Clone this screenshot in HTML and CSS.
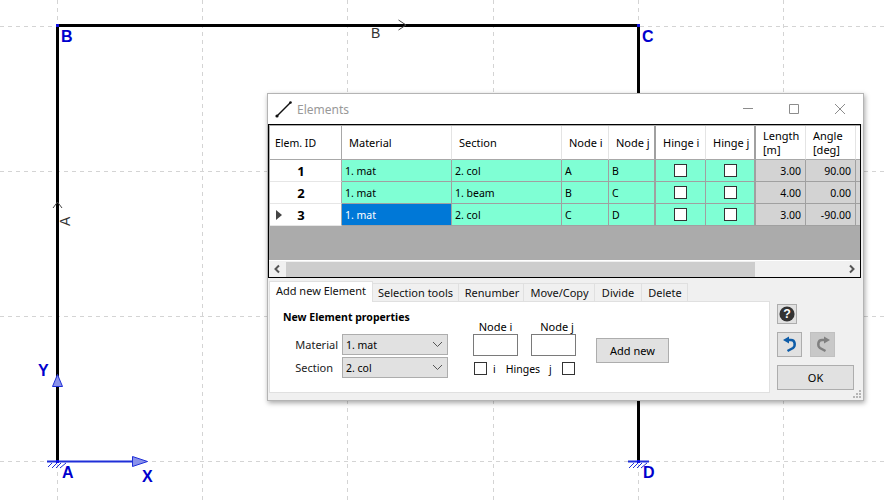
FILE: index.html
```html
<!DOCTYPE html>
<html lang="en">
<head>
<meta charset="utf-8">
<title>Elements</title>
<link rel="stylesheet" href="styles.css">
</head>
<body>
<main class="desktop">
  <svg class="canvas" width="888" height="502" viewBox="0 0 888 502">
    <g class="grid">
      <path d="M57.5 0V502M202.5 0V502M347.5 0V502M493.5 0V502M638.5 0V502M783.5 0V502"/>
      <path d="M0 26.5H888M0 171.5H888M0 316.5H888M0 461.5H888"/>
    </g>
    <g class="beam">
      <path d="M57.5 26V461M56 25.5H640M638.5 25V461"/>
    </g>
    <g class="axis">
      <path class="axis-line" d="M47 461.5H134"/>
      <path class="axis-tip" d="M132.500 456.500L147.500 461.500L132.500 466.500Z"/>
      <path class="axis-tip" d="M52.500 386.500L57.500 374.500L62.500 386.500Z"/>
      <path class="axis-line" d="M628 461.500H649"/>
      <path class="hatch" d="M48 467L52 463M52 468L57 463M56 468L61 463M60 468L66 463M629 468L634 463M633 468L638 463M637 468L642 463M641 468L647 463"/>
      <rect class="node" x="56" y="24" width="3" height="3"/>
      <rect class="node" x="637" y="24" width="3" height="3"/>
      <rect class="node" x="56" y="460" width="3" height="3"/>
      <rect class="node" x="637" y="460" width="3" height="3"/>
    </g>
    <path class="chev" d="M398.500 20L406 25L398.500 30M53 208L57.500 202L62 208"/>
    <text class="lbl" x="61" y="42">B</text>
    <text class="lbl" x="642" y="42">C</text>
    <text class="lbl" x="62" y="478">A</text>
    <text class="lbl" x="643" y="478">D</text>
    <text class="lbl" x="38" y="376">Y</text>
    <text class="lbl" x="142" y="482">X</text>
    <text class="tag" x="371" y="38">B</text>
    <text class="tag" transform="translate(70 226) rotate(-90)">A</text>
  </svg>

  <section class="dialog">
    <header class="titlebar">
      <svg class="app-icon" width="18" height="18" viewBox="0 0 18 18"><path class="app-line" d="M2 16L15.500 2.500"/><circle cx="2" cy="16" r="1.600"/><circle cx="15.500" cy="2.500" r="1.300"/></svg>
      <span class="title">Elements</span>
      <svg class="winbtn" width="12" height="12" viewBox="0 0 12 12"><path d="M1 5.500H11"/></svg>
      <svg class="winbtn" width="12" height="12" viewBox="0 0 12 12"><path d="M1.500 1.500H10.500V10.500H1.500Z"/></svg>
      <svg class="winbtn last" width="12" height="12" viewBox="0 0 12 12"><path d="M1 1L11 11M11 1L1 11"/></svg>
    </header>

    <div class="gridview">
      <div class="table">
        <div class="th rowh">Elem. ID</div>
        <div class="th">Material</div>
        <div class="th">Section</div>
        <div class="th">Node i</div>
        <div class="th sep">Node j</div>
        <div class="th">Hinge i</div>
        <div class="th sep">Hinge j</div>
        <div class="th">Length<br>[m]</div>
        <div class="th">Angle<br>[deg]</div>
        <div class="th end"></div>

        <div class="rh">1</div>
        <div class="td">1. mat</div><div class="td">2. col</div><div class="td">A</div><div class="td sep">B</div>
        <div class="td chk"><i class="box"></i></div><div class="td chk sep"><i class="box"></i></div>
        <div class="ro">3.00</div><div class="ro">90.00</div><div class="ro end"></div>

        <div class="rh">2</div>
        <div class="td">1. mat</div><div class="td">1. beam</div><div class="td">B</div><div class="td sep">C</div>
        <div class="td chk"><i class="box"></i></div><div class="td chk sep"><i class="box"></i></div>
        <div class="ro">4.00</div><div class="ro">0.00</div><div class="ro end"></div>

        <div class="rh cur"><svg class="cur-arrow" width="7" height="10" viewBox="0 0 7 10"><path d="M0 0L6 5L0 10Z"/></svg>3</div>
        <div class="td selected">1. mat</div><div class="td">2. col</div><div class="td">C</div><div class="td sep">D</div>
        <div class="td chk"><i class="box"></i></div><div class="td chk sep"><i class="box"></i></div>
        <div class="ro">3.00</div><div class="ro">-90.00</div><div class="ro end"></div>
      </div>
      <div class="empty"></div>
      <div class="hscroll">
        <svg class="sarrow" width="17" height="16" viewBox="0 0 17 16"><path d="M10 4.500L6.500 8L10 11.500"/></svg>
        <div class="thumb"></div>
        <svg class="sarrow end-arrow" width="17" height="16" viewBox="0 0 17 16"><path d="M7 4.500L10.500 8L7 11.500"/></svg>
      </div>
    </div>

    <div class="lower">
      <div class="tabsarea">
        <nav class="tabs">
          <span class="tab active">Add new Element</span>
          <span class="tab w-sel">Selection tools</span>
          <span class="tab w-ren">Renumber</span>
          <span class="tab w-mov">Move/Copy</span>
          <span class="tab w-div">Divide</span>
          <span class="tab w-del">Delete</span>
        </nav>
        <div class="panel">
          <div class="props">
            <h2 class="heading">New Element properties</h2>
            <div class="combo-row"><span class="flabel">Material</span><span class="combo">1. mat<svg width="11" height="7" viewBox="0 0 11 7"><path d="M1 1L5.500 5.500L10 1"/></svg></span></div>
            <div class="combo-row"><span class="flabel short">Section</span><span class="combo">2. col<svg width="11" height="7" viewBox="0 0 11 7"><path d="M1 1L5.500 5.500L10 1"/></svg></span></div>
          </div>
          <div class="nodes">
            <div class="node-fields">
              <label class="nfield">Node i<span class="input"></span></label>
              <label class="nfield nudge">Node j<span class="input"></span></label>
            </div>
            <div class="hinges"><i class="box"></i><span class="hi">i</span><span class="hw">Hinges</span><span class="hj">j</span><i class="box"></i></div>
          </div>
          <button class="btn addnew">Add new</button>
        </div>
      </div>
      <aside class="actions">
        <button class="iconbtn help"><svg width="18" height="18" viewBox="0 0 18 18"><circle cx="9" cy="9" r="8.500" fill="#333"/><text class="q" x="9" y="14">?</text></svg></button>
        <div class="undo-row">
          <button class="iconbtn"><svg width="18" height="18" viewBox="0 0 18 18"><path class="undo-head" d="M2 4L8 0.500V7.500Z"/><path class="undo" d="M7 4H10C14.500 4 14.500 10 12 12L6.500 15"/></svg></button>
          <button class="iconbtn off"><svg width="18" height="18" viewBox="0 0 18 18"><path class="redo-head" d="M16 4L10 0.500V7.500Z"/><path class="redo" d="M11 4H8C3.500 4 3.500 10 6 12L11.500 15"/></svg></button>
        </div>
        <button class="btn ok">OK</button>
      </aside>
      <svg class="grip" width="10" height="10" viewBox="0 0 10 10"><path d="M7 1h2v2H7zM4 4h2v2H4zM7 4h2v2H7zM1 7h2v2H1zM4 7h2v2H4zM7 7h2v2H7z"/></svg>
    </div>
  </section>
</main>
</body>
</html>
```
FILE: styles.css
```css
* { box-sizing: border-box; }
html, body { margin: 0; padding: 0; background: #fff; }
body { font-family: "Noto Sans", "Open Sans", sans-serif; font-size: 11px; color: #000; }
.desktop { position: relative; width: 888px; height: 502px; overflow: hidden; }
.canvas { position: absolute; left: 0; top: 0; }
.grid path { fill: none; stroke: #d4d4d4; stroke-width: 1; stroke-dasharray: 4 4; }
.beam path { fill: none; stroke: #000; stroke-width: 3; }
.axis-line { fill: none; stroke: #1f2fd8; stroke-width: 2; }
.axis-tip { fill: #8a92ea; stroke: #1f2fd8; stroke-width: 1; }
.hatch { fill: none; stroke: #1f2fd8; stroke-width: 1; }
.node { fill: #1010e0; }
.chev { fill: none; stroke: #444; stroke-width: 1; }
.lbl { font-family: "Liberation Sans", sans-serif; font-size: 16px; font-weight: 700; fill: #0000cd; }
.tag { font-family: "Liberation Sans", sans-serif; font-size: 14px; fill: #333; }

.dialog { position: absolute; left: 267px; top: 93px; width: 597px; height: 308px; background: #f0f0f0; border: 1px solid #b4b4b4; box-shadow: 1px 2px 5px rgba(0,0,0,.35); display: flex; flex-direction: column; }
.titlebar { height: 30px; background: #fff; display: flex; align-items: center; padding-left: 7px; }
.app-icon { flex: none; }
.app-icon circle { fill: #111; }
.app-line { fill: none; stroke: #111; stroke-width: 1.500; }
.title { margin-left: 4px; font-size: 12px; color: #999; flex: 1; }
.winbtn { margin-left: 34px; flex: none; }
.winbtn path { fill: none; stroke: #8c8c8c; stroke-width: 1; }
.winbtn.last { margin-right: 17px; }

.gridview { margin-right: 2px; height: 154px; border: 1px solid #000; background: #ababab; display: flex; flex-direction: column; }
.table { padding: 1px 0 0 1px; display: grid; grid-template-columns: 72px 110px 110px 47px 47px 50px 50px 50px 50px 4px; grid-template-rows: 34px 22px 22px 22px; flex: none; }
.th { background: #fff; border-right: 1px solid #e4e4e4; border-bottom: 1px solid #a8a8a8; display: flex; align-items: center; padding-left: 7px; line-height: 14px; white-space: nowrap; font-size: 11px; }
.th.rowh { padding-left: 5px; border-right: 1px solid #a8a8a8; font-size: 10.500px; }
.rh { background: #fff; border-bottom: 1px solid #e6e6e6; border-right: 1px solid #a8a8a8; font-weight: 700; font-size: 13px; display: flex; align-items: center; justify-content: center; position: relative; padding-right: 9px; }
.cur-arrow { position: absolute; left: 6px; top: 6px; }
.cur-arrow path { fill: #444; }
.td { background: #7fffd4; border-right: 1px solid #a0a0a0; border-bottom: 1px solid #a0a0a0; display: flex; align-items: center; padding-left: 3px; font-size: 10.500px; }
.td.selected { background: #0078d7; color: #fff; }
.td.chk { justify-content: center; padding: 0; }
.box { display: block; width: 13px; height: 13px; flex: none; background: #fff; border: 1px solid #333; }
.ro { background: #d3d3d3; border-right: 1px solid #a0a0a0; border-bottom: 1px solid #a0a0a0; display: flex; align-items: center; justify-content: flex-end; padding-right: 4px; font-size: 10.500px; }
.th.sep, .td.sep { border-right: 2px solid #a0a0a0; }
.th.end { background: #fff; padding: 0; border: 0; border-bottom: 1px solid #a8a8a8; }
.ro.end { padding: 0; border-right: 0; }
.empty { flex: 1; }
.hscroll { height: 17px; background: #f0f0f0; border-top: 1px solid #fff; display: flex; align-items: center; }
.sarrow { flex: none; }
.sarrow path { fill: none; stroke: #555; stroke-width: 2; }
.thumb { width: 469px; height: 15px; background: #cdcdcd; }
.end-arrow { margin-left: auto; }

.lower { position: relative; flex: 1; display: flex; padding: 3px 0 0 1px; }
.tabsarea { width: 501px; display: flex; flex-direction: column; }
.tabs { display: flex; align-items: flex-end; height: 20px; position: relative; z-index: 1; }
.tab { height: 18px; border: 1px solid #e0e0e0; border-left: 0; border-bottom: 0; background: #f0f0f0; display: flex; align-items: center; justify-content: center; color: #111; font-size: 11px; white-space: nowrap; }
.tab.active { width: 104px; height: 21px; margin-bottom: -1px; padding-bottom: 3px; background: #fff; border: 1px solid #e0e0e0; border-bottom: 0; }
.w-sel { width: 86px; }
.w-ren { width: 65px; padding-left: 2px; }
.w-mov { width: 71px; padding-left: 1px; }
.w-div { width: 47px; }
.w-del { width: 46px; padding-left: 1px; }
.panel { width: 501px; height: 92px; background: #fff; border: 1px solid #e0e0e0; display: flex; align-items: flex-start; }
.props { width: 179px; padding: 8px 0 0 13px; flex: none; }
.heading { margin: 0 0 10px; font-size: 10.500px; line-height: 14px; font-weight: 700; }
.combo-row { display: flex; align-items: center; margin-bottom: 2px; height: 21px; }
.flabel { width: 59px; text-align: right; padding-right: 4px; font-size: 11px; color: #222; }
.flabel.short { padding-right: 9px; }
.combo { width: 106px; height: 21px; background: #e1e1e1; border: 1px solid #adadad; display: flex; align-items: center; justify-content: space-between; padding: 0 4px 0 3px; font-size: 10.500px; }
.combo svg path { fill: none; stroke: #555; stroke-width: 1; }
.nodes { width: 116px; padding-top: 17px; flex: none; margin-left: 24px; margin-right: -7px; }
.node-fields { display: flex; gap: 13px; }
.nfield { width: 45px; display: flex; flex-direction: column; align-items: center; font-size: 11px; line-height: 15px; }
.nfield.nudge { text-indent: 7px; }
.input { display: block; width: 45px; height: 22px; background: #fff; border: 1px solid #7a7a7a; }
.hinges { display: flex; align-items: center; margin-top: 6px; padding-left: 1px; font-size: 10.500px; height: 13px; }
.hi { margin-left: 6px; }
.hw { margin-left: 10px; }
.hj { margin-left: 9px; margin-right: 10px; }
.btn { font-family: inherit; font-size: 11px; background: #e1e1e1; border: 1px solid #adadad; color: #000; padding: 0; }
.addnew { width: 73px; height: 25px; margin: 36px 0 0 14px; flex: none; }
.actions { width: 90px; padding: 23px 0 0 7px; display: flex; flex-direction: column; }
.iconbtn { width: 25px; height: 25px; background: #e1e1e1; border: 1px solid #adadad; padding: 0; display: flex; align-items: center; justify-content: center; }
.iconbtn.help { width: 20px; height: 20px; }
.iconbtn.help svg { width: 16px; height: 16px; }
.q { font-family: "Liberation Sans", sans-serif; font-size: 14px; font-weight: 700; fill: #fff; text-anchor: middle; }
.undo-row { display: flex; gap: 8px; margin: 8px 0; }
.undo { fill: none; stroke: #0d5ca8; stroke-width: 2.500; }
.undo-head { fill: #0d5ca8; }
.redo { fill: none; stroke: #808080; stroke-width: 2.500; }
.redo-head { fill: #808080; }
.iconbtn.off { background: #c8c8c8; border-color: #c0c0c0; }
.ok { width: 77px; height: 25px; }
.grip { position: absolute; right: 1px; bottom: 1px; }
.grip path { fill: #b5b5b5; }
```
